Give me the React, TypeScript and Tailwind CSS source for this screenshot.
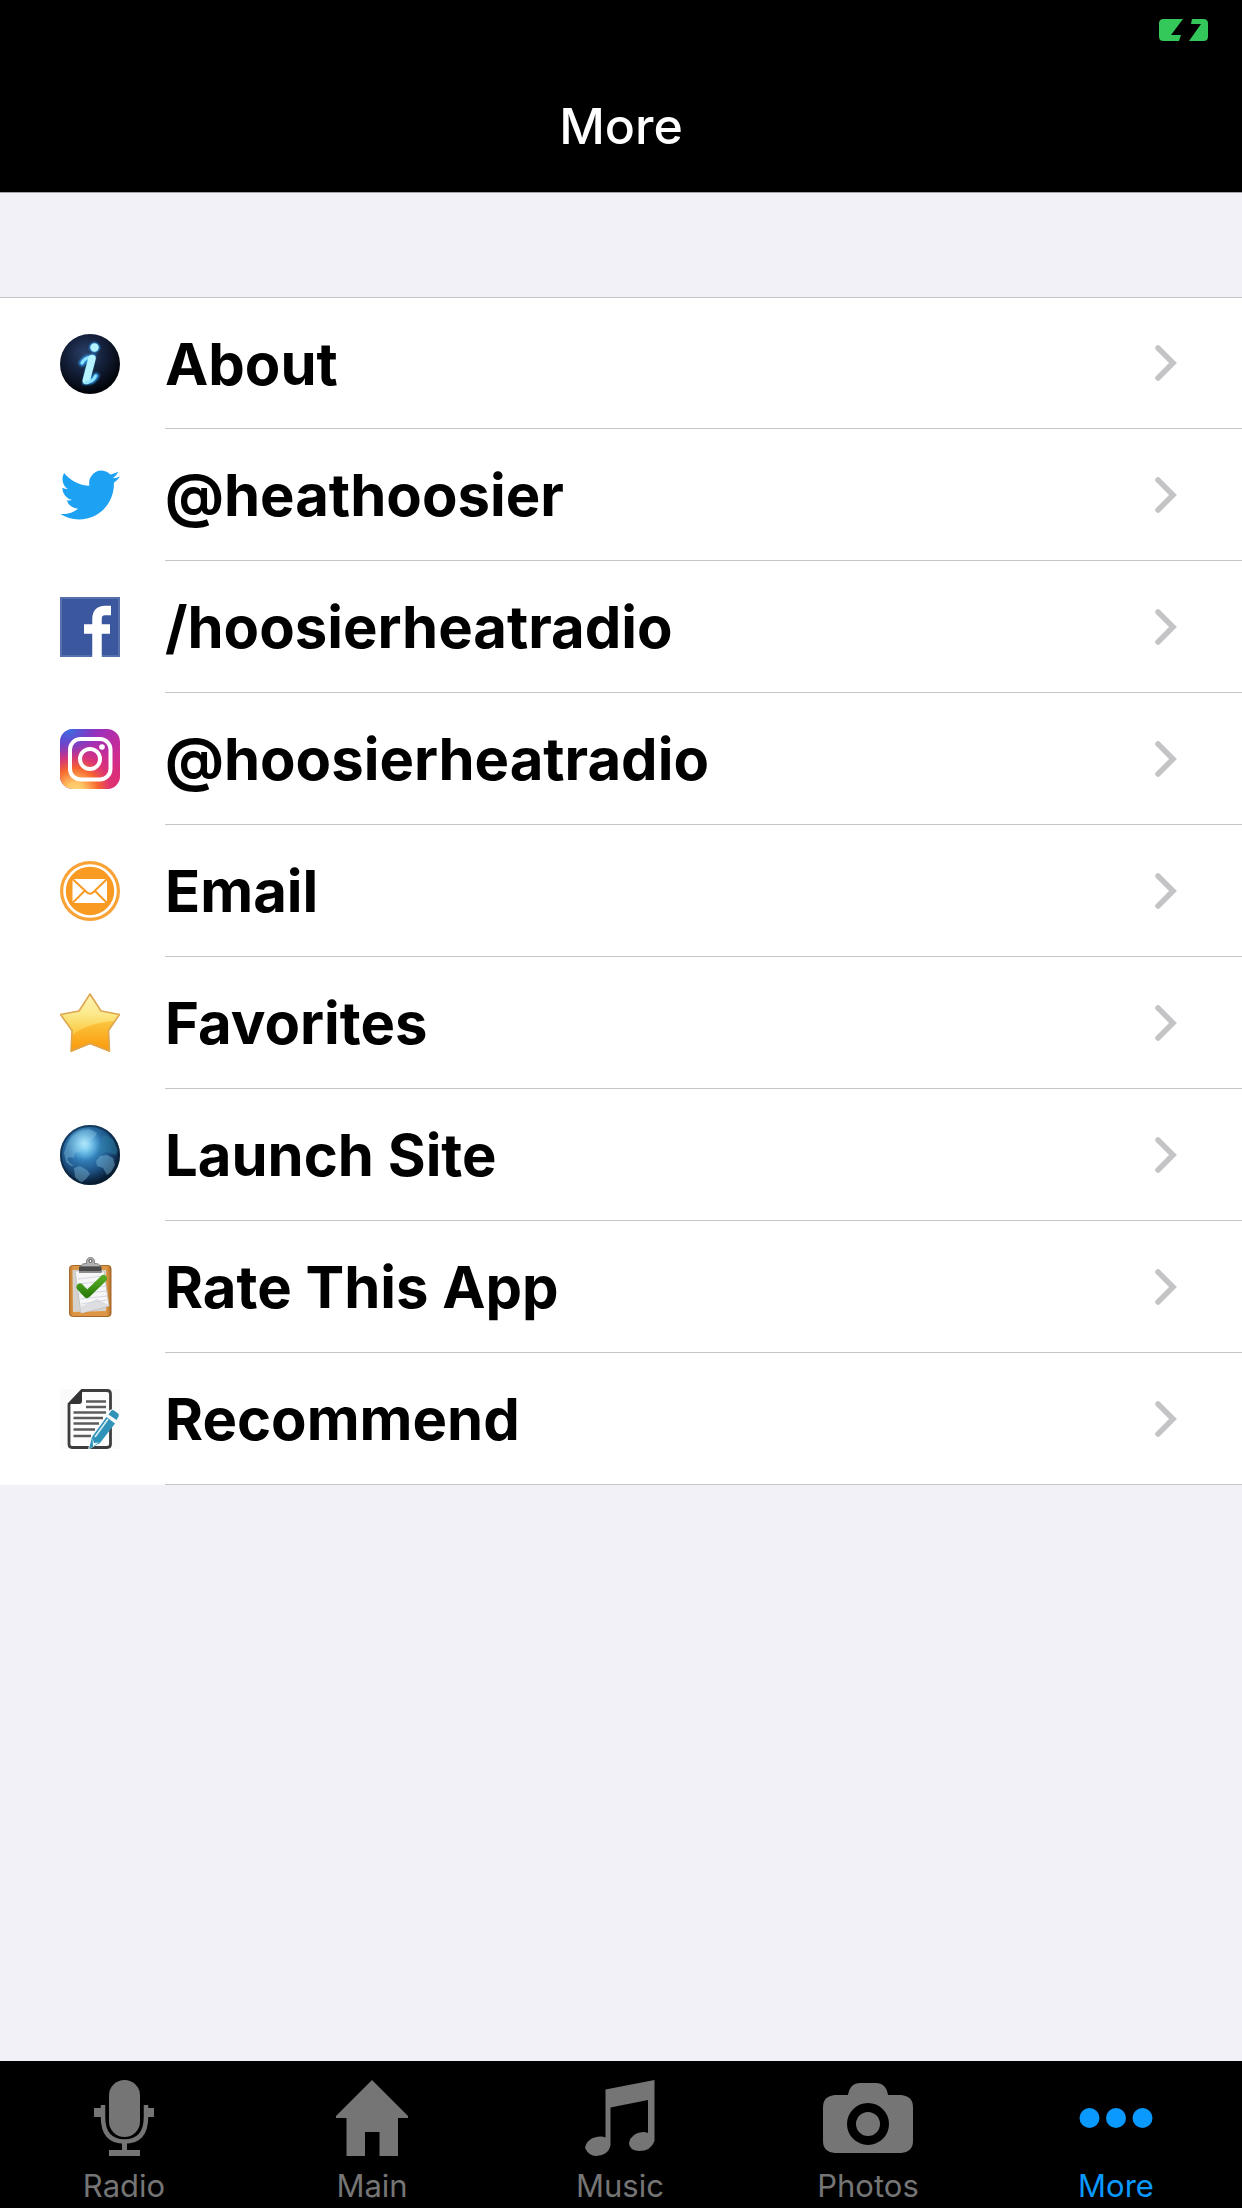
import type { ReactNode } from "react";

function InfoIcon() {
  return (
    <svg viewBox="0 0 60 60" className="size-full" aria-hidden="true">
      <defs>
        <radialGradient id="infoBg" cx="0.42" cy="0.33" r="0.65">
          <stop offset="0" stopColor="#2b4068" />
          <stop offset="0.5" stopColor="#14203a" />
          <stop offset="1" stopColor="#02040a" />
        </radialGradient>
        <filter id="infoGlow" x="-50%" y="-50%" width="200%" height="200%">
          <feGaussianBlur stdDeviation="0.9" />
        </filter>
      </defs>
      <circle cx="30" cy="30" r="30" fill="url(#infoBg)" />
      <g fill="#2f9ff0" stroke="#2f9ff0" strokeLinecap="round" filter="url(#infoGlow)">
        <circle cx="34.5" cy="13.5" r="4.6" />
        <path d="M22 29Q25 23.500 32 23.500L26 47.500Q33 48 36 42" fill="none" strokeWidth="6" />
      </g>
      <circle cx="34.5" cy="13.5" r="4.200" fill="#b5f4ff" />
      <path d="M22 29Q25 23.500 31 23" fill="none" stroke="#8fe4ff" strokeWidth="3" strokeLinecap="round" />
      <path d="M32 24.500L26.300 46.500" stroke="#b5f4ff" strokeWidth="7.500" strokeLinecap="round" />
      <path d="M26 48.500Q33 48 35.500 42" fill="none" stroke="#8fe4ff" strokeWidth="3" strokeLinecap="round" />
    </svg>
  );
}

function TwitterIcon() {
  return (
    <svg viewBox="0 0 24 24" className="size-full" aria-hidden="true">
      <path
        fill="#1da1f2"
        d="M23.953 4.57a10 10 0 01-2.825.775 4.958 4.958 0 002.163-2.723c-.951.555-2.005.959-3.127 1.184a4.92 4.92 0 00-8.384 4.482C7.69 8.095 4.067 6.13 1.64 3.162a4.822 4.822 0 00-.666 2.475c0 1.71.87 3.213 2.188 4.096a4.904 4.904 0 01-2.228-.616v.06a4.923 4.923 0 003.946 4.827 4.996 4.996 0 01-2.212.085 4.936 4.936 0 004.604 3.417 9.867 9.867 0 01-6.102 2.105c-.39 0-.779-.023-1.17-.067a13.995 13.995 0 007.557 2.209c9.053 0 13.998-7.496 13.998-13.985 0-.21 0-.42-.015-.63A9.935 9.935 0 0024 4.59z"
      />
    </svg>
  );
}

function FacebookIcon() {
  return (
    <svg viewBox="0 0 60 60" className="size-full" aria-hidden="true">
      <rect width="60" height="60" fill="#3b579d" />
      <rect x="1" y="1" width="58" height="58" fill="none" stroke="#5670ac" strokeWidth="2" />
      <path d="M37 60V22Q37 13.5 45 13.5H51M24 32H50" fill="none" stroke="#fff" strokeWidth="9.5" />
    </svg>
  );
}

function InstagramIcon() {
  return (
    <svg viewBox="0 0 60 60" className="size-full" aria-hidden="true">
      <defs>
        <linearGradient id="igBase" x1="0" y1="0" x2="1" y2="0.9">
          <stop offset="0" stopColor="#5a3fd0" />
          <stop offset="0.4" stopColor="#a02fb8" />
          <stop offset="0.75" stopColor="#cf2b90" />
          <stop offset="1" stopColor="#e02a6c" />
        </linearGradient>
        <radialGradient id="igWarm" cx="0.25" cy="1.05" r="0.88">
          <stop offset="0" stopColor="#ffdc80" />
          <stop offset="0.18" stopColor="#fec564" />
          <stop offset="0.45" stopColor="#f7652e" />
          <stop offset="0.68" stopColor="#e0366f" stopOpacity="0.8" />
          <stop offset="1" stopColor="#d92d80" stopOpacity="0" />
        </radialGradient>
        <radialGradient id="igBlue" cx="0.15" cy="0" r="0.5">
          <stop offset="0" stopColor="#3a72e0" />
          <stop offset="1" stopColor="#6a3fd0" stopOpacity="0" />
        </radialGradient>
      </defs>
      <rect width="60" height="60" rx="13" fill="url(#igBase)" />
      <rect width="60" height="60" rx="13" fill="url(#igWarm)" />
      <rect width="60" height="60" rx="13" fill="url(#igBlue)" />
      <g fill="none" stroke="#fff" strokeWidth="4">
        <rect x="10" y="10" width="40.500" height="40.500" rx="10.500" />
        <circle cx="30" cy="30" r="10" />
      </g>
      <circle cx="42" cy="18" r="2.8" fill="#fff" />
    </svg>
  );
}

function EmailIcon() {
  return (
    <svg viewBox="0 0 60 60" className="size-full" aria-hidden="true">
      <circle cx="30" cy="30" r="30" fill="#f9a236" />
      <circle cx="30" cy="30" r="25.5" fill="#f99a22" stroke="#fff" strokeWidth="2.6" />
      <rect x="12.500" y="18" width="34.500" height="24" fill="#fff" />
      <path
        d="M12.500 18L26.500 31Q30 34.500 33.500 31L47 18M12.500 42L24.500 30M47 42L35 30"
        fill="none"
        stroke="#f99a22"
        strokeWidth="2"
      />
    </svg>
  );
}

function StarIcon() {
  return (
    <svg viewBox="0 0 60 60" className="size-full" aria-hidden="true">
      <defs>
        <linearGradient id="starTop" x1="0" y1="0" x2="0" y2="1">
          <stop offset="0" stopColor="#fdf3b8" />
          <stop offset="0.35" stopColor="#fbe98a" />
          <stop offset="0.7" stopColor="#fcc63a" />
          <stop offset="1" stopColor="#fba81c" />
        </linearGradient>
        <linearGradient id="starLow" x1="0" y1="0" x2="0" y2="1">
          <stop offset="0" stopColor="#fbc63f" />
          <stop offset="1" stopColor="#fb9508" />
        </linearGradient>
        <clipPath id="starClip">
          <path d="M30 0L41.500 18L60 21.500L48.500 37.500L50 59L30 51L11 59L12 37.500L0 21.500L18.500 18Z" />
        </clipPath>
      </defs>
      <g clipPath="url(#starClip)">
        <rect width="60" height="60" fill="url(#starTop)" />
        <path d="M8 46Q26 28 60 28V60H8Z" fill="url(#starLow)" />
      </g>
      <path
        d="M30 1L41 18L59.500 21.500L48.500 37.500L49.500 58L30 50.500L11 58L12 37.500L0.500 21.500L19 18Z"
        fill="none"
        stroke="#dda650"
        strokeWidth="1.600"
        strokeLinejoin="round"
      />
    </svg>
  );
}

function GlobeIcon() {
  return (
    <svg viewBox="0 0 60 60" className="size-full" aria-hidden="true">
      <defs>
        <radialGradient id="globeSea" cx="0.42" cy="0.36" r="0.66">
          <stop offset="0" stopColor="#6cc8f2" />
          <stop offset="0.3" stopColor="#3686c0" />
          <stop offset="0.62" stopColor="#1f5588" />
          <stop offset="0.86" stopColor="#0d2947" />
          <stop offset="1" stopColor="#04121f" />
        </radialGradient>
        <radialGradient id="globeShine" cx="0.4" cy="0.3" r="0.3">
          <stop offset="0" stopColor="#b8ecff" stopOpacity="0.9" />
          <stop offset="1" stopColor="#7fd3f7" stopOpacity="0" />
        </radialGradient>
        <clipPath id="globeClip">
          <circle cx="30" cy="30" r="29.5" />
        </clipPath>
      </defs>
      <circle cx="30" cy="30" r="30" fill="url(#globeSea)" />
      <g clipPath="url(#globeClip)" fill="#7fb8d6" fillOpacity="0.45">
        <path d="M7 19L12 11L20 6L29 4L37 8L34 13L29 16L31 20L24 22L19 27L15 28L14 33L9 32L6 36L4 28Z" />
        <path d="M14 43L20 41L27 45L30 49L26 54L21 58L15 52Z" />
        <path d="M36 36L40 31L47 30L53 33L55 40L51 47L47 50L43 43L37 41Z" />
        <path d="M38 20L42 17L41 13L46 10L53 15L58 25L56 30L50 28L45 27L41 29L38 26Z" fill="#2f83a6" />
        <path d="M7 34L10 38L14 41L11 41L6 37Z" />
      </g>
      <circle cx="30" cy="30" r="29" fill="url(#globeShine)" />
      <circle cx="30" cy="30" r="29" fill="none" stroke="#0a2238" strokeOpacity="0.6" strokeWidth="2" />
    </svg>
  );
}

function ClipboardIcon() {
  return (
    <svg viewBox="0 0 60 60" className="size-full" aria-hidden="true">
      <defs>
        <linearGradient id="clipWood" x1="0" y1="0" x2="1" y2="0">
          <stop offset="0" stopColor="#c07a30" />
          <stop offset="0.1" stopColor="#dd9645" />
          <stop offset="0.9" stopColor="#dd9645" />
          <stop offset="1" stopColor="#b06c26" />
        </linearGradient>
        <linearGradient id="clipTick" x1="0" y1="0" x2="0" y2="1">
          <stop offset="0" stopColor="#55a822" />
          <stop offset="1" stopColor="#2b800c" />
        </linearGradient>
      </defs>
      <rect x="9.500" y="8.500" width="41.500" height="51" rx="3" fill="url(#clipWood)" stroke="#a5672a" />
      <path d="M12.500 13H46V54L13 55Z" fill="#d5d1cc" />
      <path d="M15 14H44L49 49L21 56Z" fill="#f6f6f7" stroke="#bdbdbd" strokeWidth="0.8" />
      <path d="M37 42L49 48L22 56L20 50Z" fill="#dedee2" />
      <path d="M18 22L43 19M18 27L45 24M19 32L46 29M19 37L46 34M20 42L47 39M21 47L47 43" stroke="#cdd0dc" strokeWidth="0.8" />
      <path d="M20 10Q22 6 26.500 6.500Q26 0.500 30.500 0.500Q35 0.500 34.500 6.500Q39 6 41 10Z" fill="#b0b0b0" stroke="#777" strokeWidth="0.9" />
      <rect x="19" y="9.500" width="22.500" height="6.500" rx="1" fill="#4a4a4a" />
      <path d="M19 14H41.500V16H19Z" fill="#8b8b8b" />
      <circle cx="30.500" cy="4" r="1.500" fill="#fff" stroke="#444" strokeWidth="0.9" />
      <path
        d="M20 30L27 37.500L43.500 21.500"
        fill="none"
        stroke="url(#clipTick)"
        strokeWidth="7"
        strokeLinecap="round"
        strokeLinejoin="round"
      />
    </svg>
  );
}

function NoteIcon() {
  return (
    <svg viewBox="0 0 60 60" className="size-full" aria-hidden="true">
      <rect width="60" height="60" fill="#fafafa" />
      <path d="M22 1.500H47Q50.500 1.500 50.500 5V55Q50.500 58.500 47 58.500H12Q9 58.500 9 55V15Z" fill="#fdfdfd" stroke="#3d3d3f" strokeWidth="2.800" />
      <path d="M8 15L22 0V12Q22 15 19 15Z" fill="#333335" />
      <path
        d="M26 12.500H46M26 18H46M13.500 23.500H46M13.500 29H43M13.500 34.500H39M13.500 40.500H35M13.500 47H31"
        stroke="#5c5c5c"
        strokeWidth="2.600"
      />
      <path d="M28 61L31 47L49 22Q51 19 54 21L58 24Q60 26 58 29L40 54Z" fill="#fafafa" />
      <path d="M29 60L32 48L46.500 28L55 34.500L40 54Z" fill="#2f93b8" />
      <path d="M48.500 25.500L51 22Q52 20.500 54 21.500L58 24.500Q59.500 26 58.500 27.500L56.500 31Z" fill="#2f93b8" />
      <path d="M35 48L48 30" stroke="#d8eef5" strokeWidth="1.600" />
      <path d="M32.500 49L34 54L39 53.500L33 57.500Z" fill="#e6f5fa" />
    </svg>
  );
}

function Chevron() {
  return (
    <svg viewBox="0 0 22 36" className="h-9 w-[22px] shrink-0" aria-hidden="true">
      <path d="M3 3L18 18L3 33" fill="none" stroke="#c4c4c6" strokeWidth="5.500" strokeLinecap="round" />
    </svg>
  );
}

function BatteryIcon() {
  return (
    <svg viewBox="0 0 49 22" className="h-[22px] w-[49px]" role="img" aria-label="Battery charging">
      <path
        fill="#34c759"
        d="M4.500 0H24L12 16H22L20 22H4.500Q0 22 0 17.500V4.500Q0 0 4.500 0ZM33 0H44.500Q49 0 49 4.500V17.500Q49 22 44.500 22H30L42 5H32Z"
      />
    </svg>
  );
}

function RadioIcon() {
  return (
    <svg viewBox="0 0 60 76" className="h-[76px] w-[60px]" fill="currentColor" aria-hidden="true">
      <rect x="15" y="0" width="31" height="57" rx="15.500" />
      <path d="M9 25V37Q9 61.500 30.500 61.500Q52 61.500 52 37V25" fill="none" stroke="currentColor" strokeWidth="4.500" />
      <path d="M0 28H8V37H0ZM52 28H60V37H52ZM28 62H33V70H46V76H15V70H28Z" />
    </svg>
  );
}

function MainIcon() {
  return (
    <svg viewBox="0 0 72 76" className="h-[76px] w-[72px]" fill="currentColor" aria-hidden="true">
      <path d="M36 0L72 36V38H62V76H43.500V52H29V76H10.500V38H0V36Z" />
    </svg>
  );
}

function MusicIcon() {
  return (
    <svg viewBox="0 0 70 76" className="h-[76px] w-[70px]" fill="currentColor" aria-hidden="true">
      <path d="M20.500 9.500L69.500 0V61Q66 71 54 71Q44 70 44 63Q46 53 58 52Q61 52 63 53V20L25.500 27.500V65Q24 75 11 76Q4 76 0 68Q2 57 16 56.500Q18 56.500 20.500 57.500Z" />
    </svg>
  );
}

function PhotosIcon() {
  return (
    <svg viewBox="0 0 90 70" className="h-[70px] w-[90px]" aria-hidden="true">
      <path
        fill="currentColor"
        d="M12 12H25Q27 0 37 0H53Q63 0 65 12H78Q90 13 90 24V58Q90 69 78 70H12Q0 69 0 58V24Q0 13 12 12Z"
      />
      <circle cx="45" cy="41" r="16.500" fill="none" stroke="#000" strokeWidth="9" />
    </svg>
  );
}

function MoreIcon() {
  return (
    <svg viewBox="0 0 74 20" className="h-5 w-[74px]" fill="currentColor" aria-hidden="true">
      <circle cx="10.500" cy="10" r="10" />
      <circle cx="37" cy="10" r="10" />
      <circle cx="63.500" cy="10" r="10" />
    </svg>
  );
}

const rows: { label: string; icon: ReactNode }[] = [
  { label: "About", icon: <InfoIcon /> },
  { label: "@heathoosier", icon: <TwitterIcon /> },
  { label: "/hoosierheatradio", icon: <FacebookIcon /> },
  { label: "@hoosierheatradio", icon: <InstagramIcon /> },
  { label: "Email", icon: <EmailIcon /> },
  { label: "Favorites", icon: <StarIcon /> },
  { label: "Launch Site", icon: <GlobeIcon /> },
  { label: "Rate This App", icon: <ClipboardIcon /> },
  { label: "Recommend", icon: <NoteIcon /> },
];

const tabs: { label: string; icon: ReactNode; active?: boolean }[] = [
  { label: "Radio", icon: <RadioIcon /> },
  { label: "Main", icon: <MainIcon /> },
  { label: "Music", icon: <MusicIcon /> },
  { label: "Photos", icon: <PhotosIcon /> },
  { label: "More", icon: <MoreIcon />, active: true },
];

export default function App() {
  return (
    <div className="flex min-h-screen flex-col bg-[#f2f1f7] font-['Inter','Liberation_Sans',sans-serif]">
      <header className="border-b border-[#a5a4a9] bg-black text-white">
        <div className="flex h-15 items-center justify-end px-[34px]">
          <BatteryIcon />
        </div>
        <h1 className="flex h-33 items-center justify-center text-[50px] font-medium">More</h1>
      </header>

      <main className="flex-1 pt-26">
        <ul className="border-t border-[#c6c6c8] bg-white">
          {rows.map((row) => (
            <li key={row.label} className="h-33 first:h-[131px]">
              <a href="#" className="flex h-full items-stretch pl-15">
                <span className="flex w-[105px] shrink-0 items-center">
                  <span className="size-15">{row.icon}</span>
                </span>
                <span className="flex flex-1 items-center justify-between border-b border-[#c6c6c8] pr-[65px]">
                  <span className="pt-0.5 text-[58px] font-bold text-black">{row.label}</span>
                  <Chevron />
                </span>
              </a>
            </li>
          ))}
        </ul>
      </main>

      <nav className="grid grid-cols-5 bg-black pt-[17px] pr-0.5">
        {tabs.map((tab) => (
          <button
            key={tab.label}
            type="button"
            aria-current={tab.active ? "page" : undefined}
            className={`flex flex-col items-center ${tab.active ? "text-[#0a99ff]" : "text-[#757575]"}`}
          >
            <span className="flex h-20 items-center">{tab.icon}</span>
            <span className="mt-2 h-[42px] text-[31px] leading-10">{tab.label}</span>
          </button>
        ))}
      </nav>
    </div>
  );
}
